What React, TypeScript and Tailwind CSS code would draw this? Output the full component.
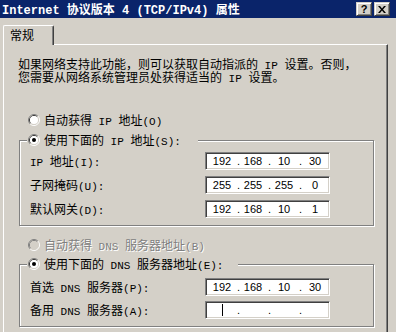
import React from "react";

const MONO = "inline-block font-['Liberation_Mono',monospace] text-[11px]";
const CJK = "inline-block font-['Noto_Sans_CJK_SC',sans-serif] text-[12px]";
const MONO_T = "inline-block font-['Liberation_Mono',monospace] text-[12px] font-bold";
const CJK_T = "inline-block font-['Noto_Sans_CJK_SC',sans-serif] text-[12px] font-bold";

function T({ s, title }: { s: string; title?: boolean }) {
  const parts = s.match(/[\x00-\x7F]+|[^\x00-\x7F]+/g) || [];
  return (
    <>
      {parts.map((p, i) =>
        /^[\x00-\x7F]/.test(p) ? (
          <span key={i} className={title ? MONO_T : MONO}>
            {p}
          </span>
        ) : (
          <span key={i} className={title ? CJK_T : CJK}>
            {p}
          </span>
        )
      )}
    </>
  );
}

function Radio({ checked, disabled }: { checked?: boolean; disabled?: boolean }) {
  return (
    <svg width="12" height="12" viewBox="0 0 12 12" className="shrink-0 block">
      <path d="M2.11 9.89A5.5 5.5 0 0 1 9.89 2.11" fill="none" stroke="#808080" strokeWidth="1" />
      <path d="M9.89 2.11A5.5 5.5 0 0 1 2.11 9.89" fill="none" stroke="#ffffff" strokeWidth="1" />
      <path d="M2.82 9.18A4.5 4.5 0 0 1 9.18 2.82" fill="none" stroke={disabled ? "#808080" : "#404040"} strokeWidth="1" />
      <path d="M9.18 2.82A4.5 4.5 0 0 1 2.82 9.18" fill="none" stroke="#d4d0c8" strokeWidth="1" />
      <circle cx="6" cy="6" r="4" fill={disabled ? "#d4d0c8" : "#ffffff"} />
      {checked && <circle cx="6" cy="6" r="2" fill="#000000" />}
    </svg>
  );
}

function IpBox({ v, cursor }: { v: string[]; cursor?: boolean }) {
  return (
    <div className="w-[125px] h-[18px] shrink-0 bg-white border border-t-[#808080] border-l-[#808080] border-b-white border-r-white shadow-[inset_1px_1px_0_#404040,inset_-1px_-1px_0_#d4d0c8] flex items-center pl-[3px] font-['Liberation_Sans',sans-serif] text-[11px] leading-[12px] text-black">
      {v.map((n, i) => (
        <React.Fragment key={i}>
          {i === 0 && cursor ? (
            <span className="w-[26px] flex justify-center">
              <span className="w-px h-[12px] bg-black" />
            </span>
          ) : (
            <span className="w-[26px] text-center">{n}</span>
          )}
          {i < 3 && <span className="w-[5px] text-right">.</span>}
        </React.Fragment>
      ))}
    </div>
  );
}

function Row({ label, v, cursor }: { label: string; v: string[]; cursor?: boolean }) {
  return (
    <div className="flex items-center pl-[10px] h-[18px]">
      <div className="w-[175px] whitespace-pre leading-[12px]">
        <T s={label} />
      </div>
      <IpBox v={v} cursor={cursor} />
    </div>
  );
}

export default function App() {
  return (
    <div className="w-[396px] h-[332px] overflow-hidden bg-[#d4d0c8] text-black">
      {/* title bar */}
      <div className="h-[18px] bg-[#0a246a] flex items-center pl-[2px] pr-[6px]">
        <div className="flex-1 text-white whitespace-pre leading-[14px]">
          <T s="Internet 协议版本 4 (TCP/IPv4) 属性" title />
        </div>
        <div className="flex gap-[2px]">
          <div className="w-[16px] h-[14px] bg-[#d4d0c8] border border-t-[#d4d0c8] border-l-[#d4d0c8] border-b-[#404040] border-r-[#404040] shadow-[inset_1px_1px_0_#ffffff,inset_-1px_-1px_0_#808080] flex items-center justify-center font-['Liberation_Sans',sans-serif] font-bold text-[11px] leading-[10px] text-black">
            ?
          </div>
          <div className="w-[16px] h-[14px] bg-[#d4d0c8] border border-t-[#d4d0c8] border-l-[#d4d0c8] border-b-[#404040] border-r-[#404040] shadow-[inset_1px_1px_0_#ffffff,inset_-1px_-1px_0_#808080] flex items-center justify-center">
            <svg width="8" height="7" viewBox="0 0 8 7" className="block">
              <path d="M0 0h2l2 2.4L6 0h2L5 3.5 8 7H6L4 4.6 2 7H0l3-3.5z" fill="#000000" />
            </svg>
          </div>
        </div>
      </div>

      {/* tab strip + panel */}
      <div className="pt-[7px] pl-[3px]">
        <div className="relative z-10 -mb-px w-[51px] h-[20px] bg-[#d4d0c8] border-l border-t border-white border-r border-r-[#404040] shadow-[inset_-1px_0_0_#808080] rounded-tl-[2px] rounded-tr-[2px] pl-[6px] pt-[2px] leading-[12px] whitespace-pre">
          <T s="常规" />
        </div>
        <div className="w-[385px] h-[320px] border-l border-t border-white border-r border-r-[#404040] shadow-[inset_-1px_0_0_#808080]">
          {/* paragraph */}
          <div className="pl-[14px] mt-[12px] leading-[12px] whitespace-pre">
            <div className="h-[13px]">
              <T s="如果网络支持此功能，则可以获取自动指派的 IP 设置。否则，" />
            </div>
            <div className="h-[13px]">
              <T s="您需要从网络系统管理员处获得适当的 IP 设置。" />
            </div>
          </div>

          {/* radio 1 */}
          <div className="mt-[31px] pl-[24px] h-[12px] flex items-center gap-[4px] whitespace-pre leading-[12px]">
            <Radio />
            <div>
              <T s="自动获得 IP 地址(O)" />
            </div>
          </div>

          {/* group 1 */}
          <div className="mt-[14px] ml-[15px] w-[355px] border border-[#808080] shadow-[inset_1px_1px_0_#ffffff,1px_1px_0_#ffffff] pb-[7px]">
            <div className="-mt-[7px] ml-[7px] w-[171px] h-[12px] bg-[#d4d0c8] pl-[1px] flex items-center gap-[4px] whitespace-pre leading-[12px]">
              <Radio checked />
              <div>
                <T s="使用下面的 IP 地址(S):" />
              </div>
            </div>
            <div className="mt-[6px] flex flex-col gap-[6px]">
              <Row label="IP 地址(I):" v={["192", "168", "10", "30"]} />
              <Row label="子网掩码(U):" v={["255", "255", "255", "0"]} />
              <Row label="默认网关(D):" v={["192", "168", "10", "1"]} />
            </div>
          </div>

          {/* radio 3 disabled */}
          <div className="mt-[13px] pl-[24px] h-[12px] flex items-center gap-[4px] whitespace-pre leading-[12px] text-[#808080] [text-shadow:1px_1px_0_#ffffff]">
            <Radio disabled />
            <div>
              <T s="自动获得 DNS 服务器地址(B)" />
            </div>
          </div>

          {/* group 2 */}
          <div className="mt-[13px] ml-[15px] w-[355px] border border-[#808080] shadow-[inset_1px_1px_0_#ffffff,1px_1px_0_#ffffff] pb-[7px]">
            <div className="-mt-[7px] ml-[7px] w-[211px] h-[12px] bg-[#d4d0c8] pl-[1px] flex items-center gap-[4px] whitespace-pre leading-[12px]">
              <Radio checked />
              <div>
                <T s="使用下面的 DNS 服务器地址(E):" />
              </div>
            </div>
            <div className="mt-[8px] flex flex-col gap-[5px]">
              <Row label="首选 DNS 服务器(P):" v={["192", "168", "10", "30"]} />
              <Row label="备用 DNS 服务器(A):" v={["", "", "", ""]} cursor />
            </div>
          </div>
        </div>
      </div>
    </div>
  );
}
